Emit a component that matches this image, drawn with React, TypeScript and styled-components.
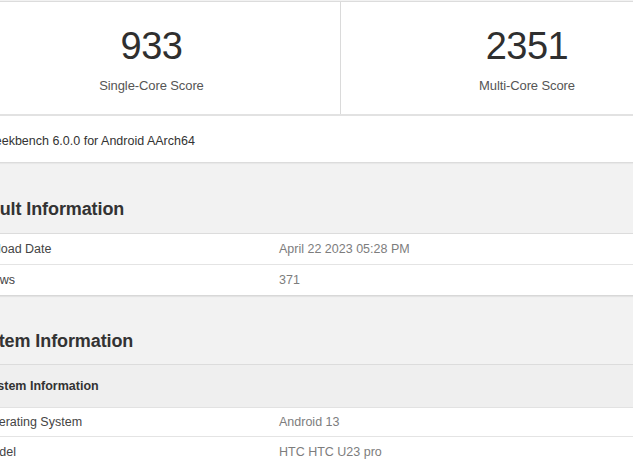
import React from "react";
import styled, { createGlobalStyle } from "styled-components";

const Global = createGlobalStyle`
  html, body {
    margin: 0;
    padding: 0;
    background: #f2f2f2;
    overflow: hidden;
    font-family: "Liberation Sans", Arial, sans-serif;
  }
`;

const Page = styled.div`
  width: 752px;
  margin-left: -38px;
  padding-top: 1px;
`;

const Card = styled.div`
  background: #fff;
  border: 1px solid #dcdcdc;
  box-shadow: 0 1px 1px rgba(0, 0, 0, 0.04);
`;

const Scores = styled.div`
  display: grid;
  grid-template-columns: 378px 1fr;
  border-bottom: 2px solid #e2e2e2;
`;

const ScoreCell = styled.div<{ $divider?: boolean }>`
  height: 112px;
  display: flex;
  flex-direction: column;
  align-items: center;
  border-right: ${(p) => (p.$divider ? "1px solid #dadada" : "none")};
`;

const ScoreValue = styled.div`
  font-size: 38px;
  line-height: 44px;
  color: #2f2f2f;
  margin-top: 22px;
  letter-spacing: -0.5px;
`;

const ScoreLabel = styled.div`
  font-size: 13px;
  line-height: 16px;
  color: #555;
  margin-top: 10px;
  letter-spacing: -0.1px;
`;

const Version = styled.div`
  height: 46px;
  display: flex;
  align-items: center;
  padding: 3px 0 0 22px;
  box-sizing: border-box;
  font-size: 12.5px;
  color: #333;
`;

const SectionTitle = styled.h2`
  margin: 0;
  padding-left: 5px;
  font-size: 18px;
  line-height: 22px;
  font-weight: bold;
  color: #333;
  letter-spacing: -0.1px;
`;

const FirstTitle = styled(SectionTitle)`
  margin-top: 35px;
  margin-bottom: 13px;
`;

const NextTitle = styled(SectionTitle)`
  margin-top: 34px;
  margin-bottom: 12px;
`;

const Table = styled.div`
  background: #fff;
  border-top: 1px solid #dcdcdc;
  border-bottom: 1px solid #d8d8d8;
  box-shadow: 0 1px 1px rgba(0, 0, 0, 0.06);
`;

const Row = styled.div<{ $h?: number }>`
  display: grid;
  grid-template-columns: 297px 1fr;
  align-items: center;
  height: ${(p) => p.$h ?? 30}px;
  & + & {
    border-top: 1px solid #e4e4e4;
  }
`;

const Label = styled.div`
  padding-left: 20px;
  font-size: 12.5px;
  color: #444;
`;

const Value = styled.div`
  padding-left: 20px;
  font-size: 12.5px;
  color: #7d7d7d;
`;

const SubHead = styled.div`
  height: 42px;
  display: flex;
  align-items: center;
  padding-left: 20px;
  background: #efefef;
  font-size: 12.5px;
  font-weight: bold;
  color: #333;
  border-bottom: 1px solid #e2e2e2;
`;

export default function App() {
  return (
    <>
      <Global />
      <Page>
        <Card>
          <Scores>
            <ScoreCell $divider>
              <ScoreValue>933</ScoreValue>
              <ScoreLabel>Single-Core Score</ScoreLabel>
            </ScoreCell>
            <ScoreCell>
              <ScoreValue>2351</ScoreValue>
              <ScoreLabel>Multi-Core Score</ScoreLabel>
            </ScoreCell>
          </Scores>
          <Version>Geekbench 6.0.0 for Android AArch64</Version>
        </Card>

        <FirstTitle>Result Information</FirstTitle>
        <Table>
          <Row>
            <Label>Upload Date</Label>
            <Value>April 22 2023 05:28 PM</Value>
          </Row>
          <Row>
            <Label>Views</Label>
            <Value>371</Value>
          </Row>
        </Table>

        <NextTitle>System Information</NextTitle>
        <Table>
          <SubHead>System Information</SubHead>
          <Row $h={28}>
            <Label>Operating System</Label>
            <Value>Android 13</Value>
          </Row>
          <Row>
            <Label>Model</Label>
            <Value>HTC HTC U23 pro</Value>
          </Row>
        </Table>
      </Page>
    </>
  );
}
